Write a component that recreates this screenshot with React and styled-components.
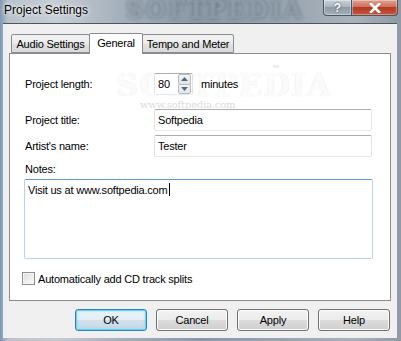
import React from "react";
import styled, { createGlobalStyle } from "styled-components";

const GlobalStyle = createGlobalStyle`
  html, body { margin: 0; padding: 0; background: #9fabb6; }
  body { font-family: "Liberation Sans", Arial, sans-serif; }
`;

const Window = styled.div`
  position: relative;
  width: 401px;
  height: 341px;
  display: flex;
  flex-direction: column;
  overflow: hidden;
  background: linear-gradient(90deg, #7f98b2 0%, #b9c2ca 2%, #c6cdd4 14%, #a4b0bb 30%, #8a98a6 50%, #97a4b0 70%, #a9b2ba 88%, #8f9aa6 100%);
`;

const TitleBar = styled.div`
  position: relative;
  height: 23px;
  display: flex;
  align-items: flex-start;
`;

const Title = styled.div`
  position: relative;
  z-index: 1;
  padding-left: 4px;
  font-size: 12px;
  line-height: 20px;
  color: #000;
  text-shadow: 0 0 6px rgba(255, 255, 255, 0.9), 0 0 3px rgba(255, 255, 255, 0.9);
`;

const TitleMark = styled.div`
  position: absolute;
  left: 126px;
  top: -5px;
  font-family: "DejaVu Serif", serif;
  font-weight: bold;
  font-size: 24px;
  letter-spacing: 2px;
  color: rgba(205, 218, 230, 0.5);
  text-shadow: 0 0 3px rgba(30, 45, 60, 0.7);
  filter: blur(1.2px);
`;

const Captions = styled.div`
  position: relative;
  z-index: 1;
  margin-left: auto;
  margin-right: 3px;
  display: flex;
`;

const CaptionButton = styled.div`
  width: ${(p) => p.$w}px;
  height: 16px;
  display: flex;
  align-items: center;
  justify-content: center;
  box-sizing: border-box;
  border: 1px solid #4a5560;
  border-top: none;
  border-radius: ${(p) => (p.$close ? "0 0 4px 0" : "0 0 0 4px")};
  margin-left: ${(p) => (p.$close ? "-1px" : "0")};
  background: ${(p) =>
    p.$close
      ? "linear-gradient(#e0a294 0%, #cf6f5c 45%, #b53a22 50%, #c2583e 100%)"
      : "linear-gradient(#c9d1d8 0%, #aab5bf 45%, #8e9ba7 50%, #a4b0ba 100%)"};
  box-shadow: inset 0 0 0 1px rgba(255, 255, 255, 0.35);
  color: #fff;
  font-weight: bold;
  font-size: 12px;
  text-shadow: 0 0 2px #333;
`;

const Client = styled.div`
  flex: 1;
  margin: 0 4px 3px 3px;
  background: #f0f0f0;
  border-top: 1px solid #4d5560;
  display: flex;
  flex-direction: column;
  font-size: 11px;
  letter-spacing: -0.2px;
  color: #000;
`;

const Tabs = styled.div`
  margin: 8px 6px 0 8px;
  height: 21px;
  display: flex;
  align-items: flex-end;
  position: relative;
  z-index: 2;
`;

const Tab = styled.div`
  width: ${(p) => p.$w}px;
  height: ${(p) => (p.$active ? 21 : 19)}px;
  box-sizing: border-box;
  border: 1px solid #898c95;
  border-bottom: ${(p) => (p.$active ? "none" : "1px solid #898c95")};
  margin-bottom: ${(p) => (p.$active ? "-1px" : "0")};
  margin-left: ${(p) => (p.$first ? "0" : "-1px")};
  border-radius: 2px 2px 0 0;
  background: ${(p) => (p.$active ? "#fff" : "linear-gradient(#f3f3f3, #ebebeb 50%, #e1e1e1 51%, #d9d9d9)")};
  display: flex;
  align-items: center;
  justify-content: center;
  padding-bottom: ${(p) => (p.$active ? "3px" : "0")};
  position: relative;
  z-index: ${(p) => (p.$active ? 2 : 1)};
`;

const Panel = styled.div`
  position: relative;
  margin: 0 6px 0 6px;
  height: 248px;
  box-sizing: border-box;
  border: 1px solid #898c95;
  background: #fff;
  padding: 19px 18px 0 15px;
  display: flex;
  flex-direction: column;
`;

const PanelMark = styled.div`
  position: absolute;
  left: 106px;
  top: 13px;
  font-family: "DejaVu Serif", serif;
  font-weight: bold;
  font-size: 31px;
  letter-spacing: 1px;
  color: #fbfbfb;
  text-shadow: 0 0 1px #e2e2e2;
  pointer-events: none;
`;

const MarkUrl = styled.div`
  position: absolute;
  left: 130px;
  top: 45px;
  font-family: "DejaVu Serif", serif;
  font-size: 10px;
  color: #dadada;
`;

const MarkTm = styled.div`
  position: absolute;
  left: 262px;
  top: 10px;
  font-size: 7px;
  color: #d6d6d6;
`;

const Row = styled.div`
  position: relative;
  z-index: 1;
  display: grid;
  grid-template-columns: 129px 1fr;
  align-items: center;
  margin-top: ${(p) => p.$mt || 0}px;
  height: 22px;
`;

const Field = styled.div`
  height: 22px;
  box-sizing: border-box;
  border: 1px solid #e2e3ea;
  border-top-color: #abadb3;
  border-bottom-color: #e3e9ef;
  border-radius: 2px;
  background: #fff;
  display: flex;
  align-items: center;
  padding-left: 3px;
`;

const SpinWrap = styled.div`
  display: flex;
  align-items: center;
`;

const SpinField = styled(Field)`
  width: 39px;
  padding-right: 1px;
`;

const SpinValue = styled.span`
  flex: 1;
`;

const SpinButtons = styled.div`
  width: 13px;
  height: 20px;
  display: flex;
  flex-direction: column;
`;

const SpinButton = styled.div`
  flex: 1;
  box-sizing: border-box;
  border: 1px solid #b5b9c1;
  margin-top: ${(p) => (p.$down ? "-1px" : "0")};
  background: linear-gradient(#f6f6f6, #e4e4e4);
  border-radius: 2px;
  display: flex;
  align-items: center;
  justify-content: center;
`;

const Unit = styled.span`
  margin-left: 8px;
`;

const NotesLabel = styled.div`
  position: relative;
  z-index: 1;
  margin-top: 6px;
  line-height: 13px;
`;

const Notes = styled.div`
  margin: 3px -1px 0 -1px;
  height: 80px;
  box-sizing: border-box;
  border: 1px solid;
  border-color: #5b9bd0 #b6d2ea #b6d2ea #b6d2ea;
  border-radius: 2px;
  padding: 3px 3px;
  line-height: 13px;
  background: #fff;
`;

const Caret = styled.span`
  display: inline-block;
  width: 1px;
  height: 13px;
  background: #000;
  vertical-align: -2px;
  margin-left: 1px;
`;

const CheckRow = styled.label`
  display: flex;
  align-items: center;
  margin: 13px 0 0 -3px;
  height: 13px;
`;

const Box = styled.span`
  width: 13px;
  height: 13px;
  box-sizing: border-box;
  border: 1px solid #8f8f8f;
  background: linear-gradient(135deg, #dcdcdc, #fbfbfb);
  box-shadow: inset 0 0 0 1px #f4f4f4;
  margin-right: 3px;
`;

const Footer = styled.div`
  display: flex;
  justify-content: flex-end;
  gap: 9px;
  margin: 8px 7px 0 0;
`;

const Button = styled.button`
  width: 72px;
  height: 22px;
  box-sizing: border-box;
  font: inherit;
  font-size: 11px;
  letter-spacing: -0.2px;
  color: #000;
  border-radius: 3px;
  padding: 0;
  border: 1px solid ${(p) => (p.$default ? "#3c7fb1" : "#707070")};
  background: ${(p) =>
    p.$default
      ? "linear-gradient(#edf4f9 0%, #e3edf4 50%, #d2e0ea 51%, #c6d7e3 100%)"
      : "linear-gradient(#f2f2f2 0%, #ebebeb 50%, #dddddd 51%, #cfcfcf 100%)"};
  box-shadow: ${(p) =>
    p.$default ? "inset 0 0 0 1px #5fd4f7, inset 0 0 2px 2px rgba(120, 220, 250, 0.35)" : "inset 0 0 0 1px #fcfcfc"};
`;

const Arrow = ({ up }) => (
  <svg width="7" height="4" viewBox="0 0 7 4">
    <path d={up ? "M0 4 L3.5 0 L7 4 Z" : "M0 0 L3.5 4 L7 0 Z"} fill="#4d6a8a" />
  </svg>
);

export default function App() {
  return (
    <>
      <GlobalStyle />
      <Window>
        <TitleBar>
          <TitleMark>SOFTPEDIA</TitleMark>
          <Title>Project Settings</Title>
          <Captions>
            <CaptionButton $w={29}>?</CaptionButton>
            <CaptionButton $w={47} $close>
              <svg width="12" height="10" viewBox="0 0 12 10">
                <path d="M2 1 L10 9 M10 1 L2 9" stroke="#fff" strokeWidth="2.6" strokeLinecap="square" />
              </svg>
            </CaptionButton>
          </Captions>
        </TitleBar>
        <Client>
          <Tabs>
            <Tab $w={79} $first>Audio Settings</Tab>
            <Tab $w={54} $active>General</Tab>
            <Tab $w={92}>Tempo and Meter</Tab>
          </Tabs>
          <Panel>
            <PanelMark>SOFTPEDIA</PanelMark>
            <MarkTm>™</MarkTm>
            <MarkUrl>www.softpedia.com</MarkUrl>
            <Row>
              <span>Project length:</span>
              <SpinWrap>
                <SpinField>
                  <SpinValue>80</SpinValue>
                  <SpinButtons>
                    <SpinButton>
                      <Arrow up />
                    </SpinButton>
                    <SpinButton $down>
                      <Arrow />
                    </SpinButton>
                  </SpinButtons>
                </SpinField>
                <Unit>minutes</Unit>
              </SpinWrap>
            </Row>
            <Row $mt={14}>
              <span>Project title:</span>
              <Field>Softpedia</Field>
            </Row>
            <Row $mt={4}>
              <span>Artist's name:</span>
              <Field>Tester</Field>
            </Row>
            <NotesLabel>Notes:</NotesLabel>
            <Notes>
              Visit us at www.softpedia.com
              <Caret />
            </Notes>
            <CheckRow>
              <Box />
              Automatically add CD track splits
            </CheckRow>
          </Panel>
          <Footer>
            <Button $default>OK</Button>
            <Button>Cancel</Button>
            <Button>Apply</Button>
            <Button>Help</Button>
          </Footer>
        </Client>
      </Window>
    </>
  );
}
